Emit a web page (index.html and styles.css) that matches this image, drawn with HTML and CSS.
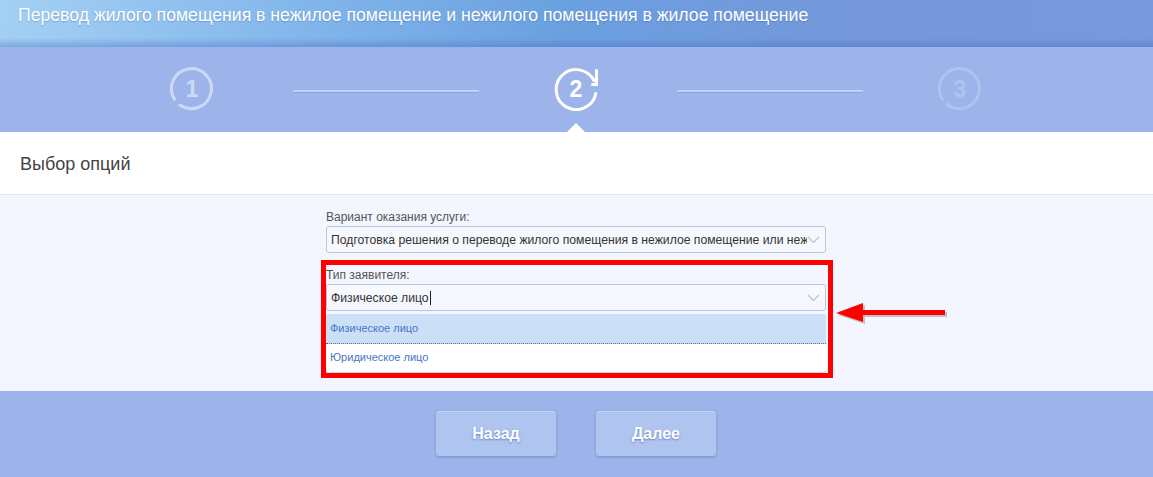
FILE: index.html
```html
<!DOCTYPE html>
<html lang="ru">
<head>
<meta charset="utf-8">
<title>Перевод жилого помещения</title>
<link rel="stylesheet" href="styles.css">
</head>
<body>
<header class="top">Перевод жилого помещения в нежилое помещение и нежилого помещения в жилое помещение</header>
<nav class="steps">
  <div class="step step-done">
    <svg class="ring" width="44" height="44" viewBox="0 0 44 44"><path d="M4.500 32.200A20 20 0 1 1 10 38"/></svg>
    <span class="num">1</span>
  </div>
  <div class="line"></div>
  <div class="step step-now">
    <svg class="ring" width="44" height="44" viewBox="0 0 44 44"><path d="M41.800 26.500A20 20 0 1 1 40 13.500"/><path d="M42.500 3.500V17.500H38.500"/></svg>
    <span class="num">2</span>
  </div>
  <div class="line"></div>
  <div class="step step-next">
    <svg class="ring" width="44" height="44" viewBox="0 0 44 44"><path d="M4.500 32.200A20 20 0 1 1 9 37.200"/></svg>
    <span class="num">3</span>
  </div>
</nav>
<h1 class="title">Выбор опций</h1>
<main class="form">
  <div class="fields">
    <label class="label">Вариант оказания услуги:</label>
    <div class="select">
      <span class="value">Подготовка решения о переводе жилого помещения в нежилое помещение или нежилого помещения в жилое</span>
      <svg class="chev" width="13" height="7" viewBox="0 0 13 7"><path d="M1 1l5.500 5.500L12 1"/></svg>
    </div>
    <label class="label label-second">Тип заявителя:</label>
    <div class="select select-open">
      <span class="value">Физическое лицо<i class="caret"></i></span>
      <svg class="chev" width="13" height="7" viewBox="0 0 13 7"><path d="M1 1l5.500 5.500L12 1"/></svg>
    </div>
    <ul class="menu">
      <li class="opt opt-active">Физическое лицо</li>
      <li class="opt">Юридическое лицо</li>
    </ul>
  </div>
  <div class="mark"></div>
  <svg class="arrow" width="114" height="24" viewBox="0 0 114 24"><path class="arrow-shadow" d="M2 12 29 2V9H111V14H29V21Z"/><path class="arrow-fill" d="M0 10 27 0V7H109V12H27V19Z"/></svg>
</main>
<footer class="actions">
  <button class="btn" type="button">Назад</button>
  <button class="btn" type="button">Далее</button>
</footer>
</body>
</html>
```
FILE: styles.css
```css
* { box-sizing: border-box; }
html, body { margin: 0; padding: 0; }
body {
  width: 1153px;
  height: 477px;
  overflow: hidden;
  font-family: "Liberation Sans", Arial, sans-serif;
  background: #9bb3e9;
}
.top {
  height: 47px;
  padding: 6px 0 0 18px;
  font-size: 17.650px;
  line-height: 19px;
  color: #fff;
  text-shadow: 0 1px 1px rgba(60, 90, 150, .35);
  background:
    linear-gradient(rgba(70, 110, 190, 0) 38px, rgba(70, 110, 190, .4) 47px),
    linear-gradient(100deg, #a4d0f4 0%, #80b4ea 28%, #6a9fe0 50%, #7597da 75%, #7a98dc 100%);
}
.steps {
  height: 85px;
  padding: 20px 0 0 170px;
  display: flex;
  align-items: flex-start;
  position: relative;
  background: #9cb4ea;
}
.step {
  position: relative;
  width: 44px;
  height: 44px;
  display: flex;
  align-items: center;
  justify-content: center;
  flex: none;
  color: #fff;
}
.ring { position: absolute; left: 0; top: 0; }
.ring path { fill: none; stroke: currentColor; stroke-width: 3; stroke-linecap: round; }
.num { position: relative; font-size: 23px; font-weight: 700; line-height: 1; }
.step-done { color: #cddaf5; }
.step-next { color: #afc3ef; }
.step-now::after {
  content: "";
  position: absolute;
  left: 13px;
  top: 56px;
  border-left: 9px solid transparent;
  border-right: 9px solid transparent;
  border-bottom: 9px solid #fff;
}
.line {
  flex: none;
  width: 186px;
  height: 2px;
  margin: 23px 75px 0 79px;
  background: #c0d0f2;
  box-shadow: 0 1px 0 rgba(110, 135, 200, .35);
}
.title {
  margin: 0;
  height: 63px;
  padding: 22px 0 0 20px;
  font-size: 18px;
  font-weight: 400;
  line-height: 20px;
  color: #444;
  background: #fff;
  border-bottom: 1px solid #e2e5f3;
}
.form {
  position: relative;
  height: 196px;
  padding: 15px 0 0 326px;
  background: #f3f6fe;
}
.fields { width: 500px; }
.label {
  display: block;
  height: 16px;
  font-size: 12px;
  line-height: 14px;
  color: #555;
}
.label-second { margin-top: 15px; }
.select {
  height: 27px;
  padding: 0 5px 0 4px;
  display: flex;
  align-items: center;
  gap: 0;
  background: #f6f8fe;
  border: 1px solid #bcc5da;
  border-radius: 3px;
  font-size: 12.200px;
  color: #333;
}
.select-open { background: linear-gradient(#f8faff, #f3f6fd); }
.value { flex: 1; min-width: 0; white-space: nowrap; overflow: hidden; }
.caret {
  display: inline-block;
  width: 1px;
  height: 14px;
  margin-left: 1px;
  vertical-align: -3px;
  background: #222;
}
.chev { flex: none; }
.chev path { fill: none; stroke: #b9c2d6; stroke-width: 1.2; }
.menu {
  list-style: none;
  margin: 3px 0 0;
  padding: 0;
  background: #fff;
  border-radius: 3px;
  box-shadow: 0 2px 1px #d4d7e0;
  font-size: 11px;
  color: #4477c4;
}
.opt { height: 28px; padding-left: 4px; line-height: 26px; }
.opt-active {
  height: 30px;
  line-height: 28px;
  background: #cbdff9;
  border-bottom: 1px dotted #4a6aa0;
  border-radius: 3px 3px 0 0;
}
.mark {
  position: absolute;
  left: 321px;
  top: 65px;
  width: 512px;
  height: 118px;
  border: 5px solid #f00;
}
.arrow { position: absolute; left: 836px; top: 108px; }
.arrow-fill { fill: #f00; }
.arrow-shadow { fill: #a9a9b5; opacity: .7; }
.actions {
  height: 86px;
  padding: 20px 1px 0 0;
  display: flex;
  justify-content: center;
  gap: 40px;
  background: #9cb4e9;
}
.btn {
  width: 120px;
  height: 45px;
  padding: 0;
  font: 700 16px "Liberation Sans", Arial, sans-serif;
  color: #fff;
  text-shadow: 0 1px 2px rgba(70, 100, 170, .7);
  background: #afc5f0;
  border: 0;
  border-top: 1px solid #c4d4f5;
  border-radius: 3px;
  box-shadow: 0 1px 3px rgba(90, 115, 180, .6);
}
```
